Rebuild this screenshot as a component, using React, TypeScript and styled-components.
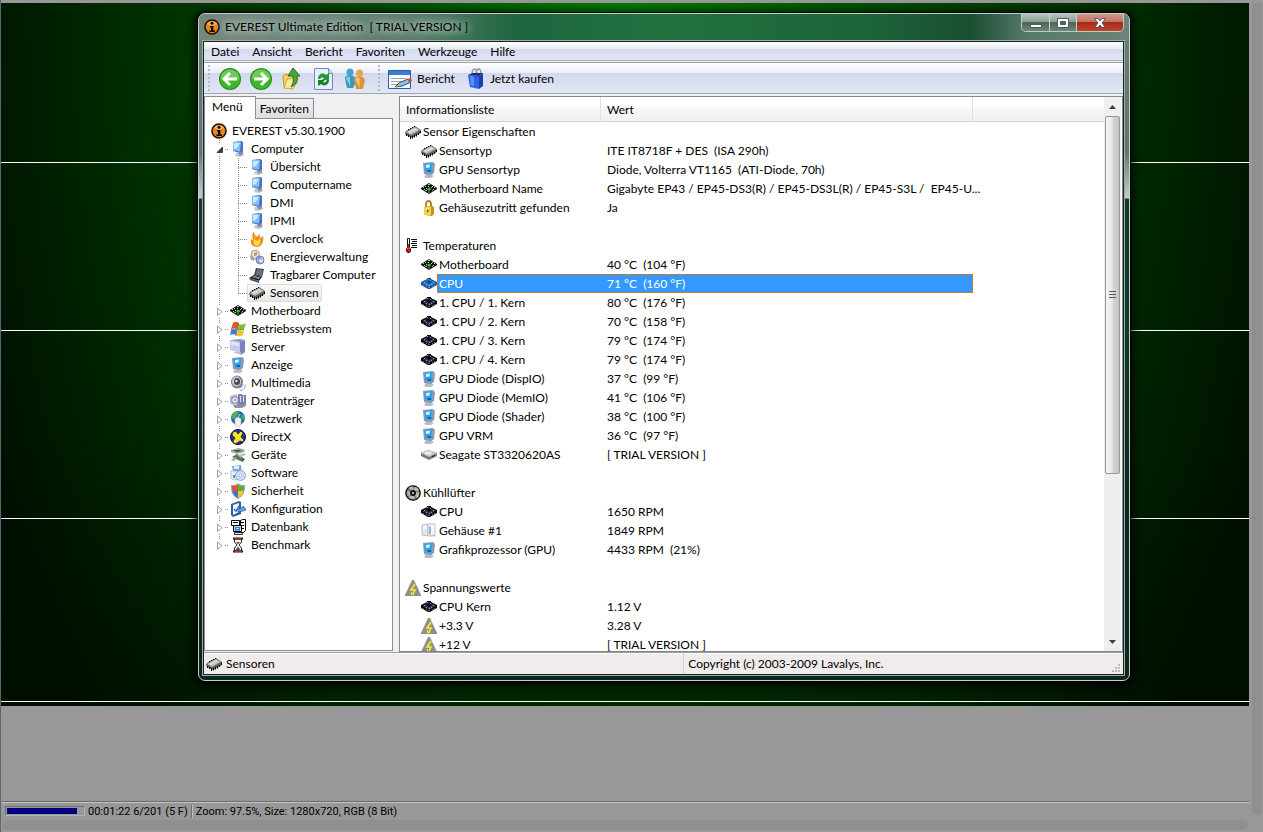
import React from "react";
import styled, { createGlobalStyle, css } from "styled-components";

const GlobalStyle = createGlobalStyle`
  * { box-sizing: border-box; }
  body {
    margin: 0;
    background: #989898;
    font-family: Lato, "Open Sans", sans-serif;
    font-size: 12px;
    line-height: 18px;
    color: #000;
  }
  button { font: inherit; color: inherit; border: 0; padding: 0; background: none; cursor: default; }
  ul { list-style: none; margin: 0; padding: 0; }
`;

/* ---------- icons ---------- */

type IconName =
  | "info" | "monitor" | "flame" | "power" | "laptop" | "chip" | "board" | "windows"
  | "server" | "display" | "speaker" | "drives" | "network" | "directx" | "devices"
  | "software" | "shield" | "config" | "database" | "hourglass" | "lock" | "thermo"
  | "cpu" | "cpuSelected" | "disk" | "fan" | "case" | "volt";

const cpuShape = (edge: string, body: string, light: string, core: string) => (
  <>
    <path d="m0 6 6-3V2h4v1l6 3v3l-7 4H7L0 9z" fill={edge} />
    <path d="m1 7 7-4 7 4-7 4z" fill={body} />
    <path d="m5 6 3-2 3 2-3 2z" fill={core} />
    <path d="M3 6.500h1M6 3.500h1M12 6.500h1M8 9.500h1M5 8.500h1M10 8.500h1M9 4.500h1" stroke={light} />
    <path d="M2 9.500h1M5 10.500h1M7 11.500h2M11 10.500h1M13 9.500h1" stroke={light} strokeWidth=".7" />
  </>
);

const drawings: Record<IconName, React.ReactNode> = {
  info: (
    <>
      <circle cx="8" cy="8" r="7" fill="#e8861e" stroke="#1d1108" strokeWidth="1.6" />
      <path d="M3 5a6 6 0 0 1 10 0L8 7z" fill="#f9b45a" />
      <circle cx="8" cy="4.2" r="1.5" fill="#140b04" />
      <path d="M6 7h3.400v4.400H11V13H5.400v-1.600H7V8.400H6z" fill="#140b04" />
    </>
  ),
  monitor: (
    <>
      <path d="M6 12h5l3 1v1l-4 2-5-1z" fill="#c3c5cc" />
      <path d="m8 12 5-2v3l-3 2z" fill="#8b93a6" />
      <path d="m3 1 8-1 2 1v9l-3 2-7-2z" fill="#4a6fc4" />
      <path d="m3 1 8 0-1 9.500-7-1z" fill="#7fbcf2" />
      <path d="m4 2 6 0-3 5-3 1z" fill="#cdeafd" />
    </>
  ),
  display: (
    <>
      <path d="M5 12h5l3 2-3 2H5l-2-1z" fill="#b7bcc8" />
      <path d="m2 1 10-1 2 2-1 9-3 2-7-1z" fill="#8799b5" />
      <path d="m3.500 2 7.500-1-.5 9.500-6-.500z" fill="#27a5ea" />
      <path d="m5 3 4-.5-.5 3L5 6z" fill="#d8f2ff" />
      <path d="M6 8h4v2H7z" fill="#1561b0" />
    </>
  ),
  flame: (
    <>
      <path d="M5 1c0 3 2 3 3 5 1-1 1-2 3-3-1 3 0 3 1 4l2-2c1 3 0 10-6 11-5 0-7-3-6-8l2 1C4 7 2 3 5 1z" fill="#ef8a1a" />
      <path d="M5 8c1 1 2 0 3 2 1-1 2-1 3-3 1 4 0 7-3 8-3 0-4-3-3-7z" fill="#ffd84e" />
      <path d="M5 2c0 2 2 3 2 5-1 0-2-1-2-5z" fill="#fbc15a" />
    </>
  ),
  power: (
    <>
      <path d="m3 2 4-1 3 2v5l-5 2-3-2z" fill="#e8e3df" stroke="#8a7f80" strokeWidth=".8" />
      <path d="m5 4 3-1v3L5 7z" fill="#d6874c" />
      <path d="M1 7c2-1 3 0 4 2v3L2 11z" fill="#a5a0ab" />
      <circle cx="11" cy="11" r="4" fill="#d5daf0" stroke="#6a73a8" />
      <path d="m8 9 3-2 2 3-1 4-3 1z" fill="#8c97d3" />
      <path d="m10 10 3 1-2 3z" fill="#fff" />
    </>
  ),
  laptop: (
    <>
      <path d="m7 1 8 1-2 8-8-2z" fill="#39424b" />
      <path d="m8 2 6 1-1.500 6-6-1.400z" fill="#66737e" />
      <path d="m5 8 8 2-3 4-10-3z" fill="#21262b" />
      <path d="m5 9 6 1.500-1 1.500-7-2z" fill="#8d979f" />
      <path d="m0 11 10 3v2L1 13z" fill="#4a5056" />
    </>
  ),
  chip: (
    <>
      <path d="m0 9 1-2 9-5 6 4v3l-9 5-6-3z" fill="#5f5f5f" />
      <path d="m1 8 9-5 5 3-9 5z" fill="#b5b7b0" />
      <path d="m2 8 8-4 3 1.500-8 4z" fill="#d8dacf" />
      <path d="M1.500 10v2M3.500 11v2M5.500 12v3M7.500 12v2.500M9.500 11v2.500M11.500 10v2.500M13.500 9v2M15.500 7v2M3 5.500h1M5 4.500h1M7 3.500h1M9 2.500h1" stroke="#000" />
    </>
  ),
  board: (
    <>
      <path d="m0 7 8-5 8 5v1l-8 5-8-5z" fill="#111" />
      <path d="M2 6.500h1M4 5.500h1M7 3.500h2M11 5.500h1M13 6.500h1M5 7.500h1M7 5.500h1M10 6.500h1M3 8.500h1M12 8.500h1M5 9.500h1" stroke="#c8c8c8" />
      <path d="m6 8 2-1.500L10.500 8 8 10z" fill="#1fd035" />
      <path d="M4 9.500h1M7 11h2M11 9.500h1" stroke="#888" />
    </>
  ),
  windows: (
    <>
      <path d="M3 2c2-2 4-1 6 0L7 8C5 7 3 7 1 8z" fill="#e4572a" />
      <path d="M9 3c2 1 4 1 7-1l-2 6c-2 1-4 1-6 0z" fill="#7cbb31" />
      <path d="M1 9c2-1 4-1 6 0l-1 5c-2-1-4-1-6 0z" fill="#3f7de0" />
      <path d="M8 9c2 1 4 1 6 0l-1 5c-2 1-4 2-6 1z" fill="#f3c326" />
      <path d="M8.500 2 6 15M1 8.500c5-2 8 2 13-.5" stroke="#5a4a3a" strokeWidth=".7" fill="none" />
    </>
  ),
  server: (
    <>
      <path d="m1 1 9-1 5 1v12l-4 3-1-1V4L1 3z" fill="#8f95cc" />
      <path d="m0 1 10 2v11L0 11z" fill="#c3c8ee" />
      <path d="m1 2 8 2v3L1 6z" fill="#e3e6fb" />
      <path d="m10 3 5-1v11l-5 2z" fill="#7b82bc" />
      <path d="M3 13h8v3z" fill="#babbd0" />
    </>
  ),
  speaker: (
    <>
      <ellipse cx="7" cy="7" rx="6" ry="6.500" fill="#7c7e82" />
      <ellipse cx="6.500" cy="6.500" rx="4.500" ry="5" fill="#caccce" />
      <ellipse cx="7" cy="6.500" rx="3" ry="3.500" fill="#46484c" />
      <circle cx="6.400" cy="6" r="1.300" fill="#dcdcdc" />
      <path d="M9 13c3 0 4-2 4-4M10 15.500c4 0 5-3 5.500-6" stroke="#8e96dd" fill="none" />
    </>
  ),
  drives: (
    <>
      <path d="m0 3 7-2v10l-5 1-2-2z" fill="#b8bbd0" />
      <path d="M8 1h4v12H7zM12 2h4v10h-4z" fill="#7a80b0" />
      <path d="M10 3h1v6h-1zM13 3h1v6h-1z" fill="#dfe2f5" />
      <circle cx="5" cy="7" r="3.300" fill="#e8eaf7" stroke="#8086ad" />
      <circle cx="5" cy="7" r="1" fill="#8086ad" />
      <path d="m3 12 12-1 1 2-4 2H5z" fill="#8f92a6" />
    </>
  ),
  network: (
    <>
      <circle cx="8" cy="7" r="7" fill="#2468b8" />
      <path d="M3 2c3-2 5-1 6 0L7 5 3 8 1 6zM12 3c2 1 3 4 2 6l-3-2z" fill="#4eb548" />
      <path d="M5 8c0-2 5-2 6 0v4c0 3-1 4-3 4s-3-1-3-4z" fill="#f2f1ec" stroke="#b8b6b0" strokeWidth=".6" />
      <path d="M8 7c0-2 2-2 2-4" stroke="#d6e6ef" fill="none" />
    </>
  ),
  directx: (
    <>
      <circle cx="8" cy="8" r="7.500" fill="#2030a8" stroke="#0c0c3c" />
      <path d="M3 3l3-1 2 3 3-3 2 2-2 4 3 3-1 2-3-1-3 2-3 1-1-3 2-3-3-3z" fill="#f4e228" stroke="#1a1a20" strokeWidth=".7" />
    </>
  ),
  devices: (
    <>
      <path d="m1 3 8-2 6 2-1 2-7 2-6-2z" fill="#9ba59a" />
      <path d="m3 3 6 0 3 1-5 1z" fill="#454b47" />
      <path d="m2 10 5-3 8 5-2 3-5-2z" fill="#57705a" />
      <path d="m8 8 6-2 2 2-5 2z" fill="#bfc5bd" />
      <path d="m1 13 4-3 2 1-3 3z" fill="#a1a8a0" />
      <path d="m7 8 4 3" stroke="#66d46e" />
    </>
  ),
  software: (
    <>
      <path d="m2 1 9-1 1 9-8 2z" fill="#7ca6e0" />
      <path d="m4 1 5 0v3H4z" fill="#e5effb" />
      <path d="m1 6 7 0 1 8-6 1-2-2z" fill="#e8eef6" stroke="#86a0c8" strokeWidth=".6" />
      <path d="M3 10h2v3H3z" fill="#4cae4c" />
      <circle cx="10.500" cy="10.500" r="5" fill="#cfdcf4" stroke="#8094c4" strokeWidth=".8" />
      <circle cx="10.500" cy="10.500" r="1.400" fill="#fff" stroke="#8094c4" strokeWidth=".6" />
    </>
  ),
  shield: (
    <>
      <path d="M8 0c2 2 4 2 7 2 0 7-1 11-7 14C2 13 1 9 1 2c3 0 5 0 7-2z" fill="#9da3a8" />
      <path d="M8 2v6H2.500C2 6 2 5 2 3c3 0 4 0 6-1z" fill="#e2572c" />
      <path d="M8 2c2 1 3 1 6 1 0 2 0 3-.5 5H8z" fill="#58b13b" />
      <path d="M2.500 8H8v7c-3-2-5-4-5.500-7z" fill="#3d72d6" />
      <path d="M8 8h5.500c-.5 3-2 5-5.500 7z" fill="#f5c92e" />
    </>
  ),
  config: (
    <>
      <path d="m1 3 8-3 2 1v12l-8 3-2-2z" fill="#2b5fa5" />
      <path d="m3 4 6-2v9l-6 3z" fill="#f3f8ff" />
      <path d="m4 8 2 2 3-5" stroke="#2d6bb5" strokeWidth="1.400" fill="none" />
      <path d="m8 8 4-1 1-2 2 2 1 2-3 1-5 1z" fill="#5fa6e8" stroke="#23548c" strokeWidth=".7" />
    </>
  ),
  database: (
    <>
      <path d="M1.500 1.500h8v5h-8zM10.500 1.500l2-1h3v11l-2 2h-3z" fill="#fff" stroke="#000" />
      <path d="M3 3.500h5M11 3.500h3M11 6.500h3M11 9.500h3" stroke="#000" />
      <path d="M3.500 6.500h8v6h-8z" fill="#d5d5d5" stroke="#000" />
      <path d="M5 8h5v3.500H5z" fill="#1c8be0" />
      <path d="M6.500 9.500h2" stroke="#fff" />
      <path d="M4.500 13.500h8v2h-8z" fill="#e8e8e8" stroke="#000" strokeWidth=".8" />
    </>
  ),
  hourglass: (
    <>
      <path d="M4.500 2v3L7 8l-2.500 3v3h7v-3L9 8l2.500-3V2z" fill="#fff" stroke="#222" />
      <path d="M6 5h4L8 7.500zM8 9.500l2.500 3.500h-5z" fill="#555" />
      <path d="M3 1.500h10M3 14.500h10" stroke="#111" strokeWidth="2" />
      <path d="M4 1.500h8M4 14.500h8" stroke="#d02020" />
    </>
  ),
  lock: (
    <>
      <path d="M5 7V4c0-4 5-4 5 0v3" stroke="#a58424" strokeWidth="1.800" fill="none" />
      <path d="m3 7 8-1 2 1v7l-2 2-7-1-1-1z" fill="#c89416" />
      <path d="M3 7h7v8H4l-1-1z" fill="#f2cf4a" />
      <path d="M4 8h4v5z" fill="#fae58c" />
      <path d="M6 9.500h1.500V12H6z" fill="#7a5608" />
    </>
  ),
  thermo: (
    <>
      <path d="M2.500.5h2v9l1 1v3l-1 1h-2l-1-1v-3l1-1z" fill="#fff" stroke="#111" />
      <path d="M3 6h1v4l1 1v3H2v-3l1-1z" fill="#e81010" />
      <path d="M6 1.500h6M7 3.500h5M6 5.500h6M7 7.500h5M6 9.500h6" stroke="#111" />
    </>
  ),
  cpu: cpuShape("#07070c", "#33334c", "#8d8daf", "#05050a"),
  cpuSelected: cpuShape("#17559c", "#3a78bd", "#68a8e2", "#104a8c"),
  disk: (
    <>
      <path d="m0 6 7-3 9 3v3l-8 4-8-4z" fill="#77797c" />
      <path d="m0 6 7-3 9 3-8 4z" fill="#c7c9cb" />
      <ellipse cx="7" cy="6" rx="3.500" ry="1.600" fill="#eceded" />
      <path d="m11 9 3-1v1l-3 1z" fill="#222" />
    </>
  ),
  fan: (
    <>
      <circle cx="8" cy="8" r="7.200" fill="#777" stroke="#0c0c0c" strokeWidth="1.300" />
      <path d="M8 8 4 2.500C6 1 7 1.500 8 2zM8 8l1-6c3 0 4 1 5 3zM8 8l6-1c0 3 0 4-2 6zM8 8l2 6c-3 0-4 0-6-2zM8 8l-5 3c-1-2-1-4 0-5z" fill="#b8b8b8" />
      <circle cx="8" cy="8" r="3" fill="#111" />
      <circle cx="8" cy="8" r=".9" fill="#fff" />
    </>
  ),
  case: (
    <>
      <path d="m1 2 6-1v12l-6-1z" fill="#dfe6ee" stroke="#a2adba" strokeWidth=".7" />
      <path d="m7 1 7 0v12l-7 0z" fill="#f4f7fa" stroke="#a2adba" strokeWidth=".7" />
      <path d="m2 3 4-.5v3L2 6z" fill="#fff" />
      <path d="M8 3.500h2v8H8z" fill="#9fb4cb" />
      <path d="M9 12.500h5" stroke="#b9c2cc" />
    </>
  ),
  volt: (
    <>
      <path d="M7 0h2l7 15v1H0v-1z" fill="#8f8f8f" />
      <path d="m10 4-4 6h4l-2 4" stroke="#f5ee28" strokeWidth="1.600" fill="none" />
      <path d="M6 14.500h3M6.500 12v2" stroke="#f5ee28" />
    </>
  ),
};

const IconSvg = styled.svg`
  display: block;
  flex: none;
  width: 16px;
  height: 16px;
`;

const Icon = ({ name }: { name: IconName }) => (
  <IconSvg viewBox="0 0 16 16" aria-hidden="true">{drawings[name]}</IconSvg>
);

/* ---------- page frame ---------- */

const Page = styled.div`
  display: flex;
  height: 100vh;
  min-height: 480px;
  padding: 3px 1px 2px 0;
  border-left: 1px solid #5d6472;
  background: #989898;
`;

const Column = styled.div`
  flex: 1;
  min-width: 0;
  display: flex;
  flex-direction: column;
`;

const ruler = (y: string) =>
  `linear-gradient(#fff, #fff) 0 ${y} / 100% 1px no-repeat`;

const Desktop = styled.main`
  flex: 1;
  min-height: 0;
  display: flex;
  padding: 10px 119px 25px 197px;
  background:
    ${ruler("159px")},
    ${ruler("327px")},
    ${ruler("515px")},
    ${ruler("698px")},
    linear-gradient(transparent 0 60%, rgba(0, 12, 0, 0.4) 100%),
    radial-gradient(ellipse 680px 1200px at 50% 0, #008000 0, #006600 20%, #004200 50%, #002e00 72%, #001000 100%);
`;

const Workspace = styled.div`
  flex: none;
  height: 95px;
`;

const PlayerStatus = styled.footer`
  flex: none;
  height: 19px;
  display: flex;
  align-items: center;
  border-top: 1px solid #6a6a6a;
  box-shadow: inset 0 1px #c4c4c4;
  padding-left: 4px;
  font-family: Roboto, "Liberation Sans", sans-serif;
  font-size: 11px;
  line-height: 17px;
`;

const Progress = styled.div`
  width: 80px;
  height: 10px;
  margin-right: 3px;
  padding: 1px;
  border: 1px solid;
  border-color: #707070 #b4b4b4 #b4b4b4 #707070;
`;

const ProgressFill = styled.div`
  height: 6px;
  background: #000080;
`;

const Divider = styled.span`
  width: 2px;
  height: 13px;
  margin: 0 3px;
  border-left: 1px solid #6e6e6e;
  border-right: 1px solid #c0c0c0;
`;

const BottomTrack = styled.div`
  flex: none;
  height: 10px;
  margin: 0 1px;
  border-radius: 5px;
  background: #8f8f8f;
`;

const SideTrack = styled.div`
  flex: none;
  width: 10px;
  margin: 0 0 15px 3px;
  border-radius: 0 0 5px 5px;
  background: #8f8f8f;
`;

/* ---------- application window ---------- */

const AppWindow = styled.section`
  flex: 1;
  min-width: 0;
  display: flex;
  flex-direction: column;
  padding: 0 5px 5px 4px;
  border: 1px solid #c3d0c9;
  border-radius: 7px;
  background: linear-gradient(#657f74 0, #5d776c 140px, #80948b 152px, #c3ccc8 184px, #12382b 185px, #12382b 310px, #0e2721 480px, #0c2620 100%);
  box-shadow: 0 0 0 1px #000, 0 2px 10px 4px rgba(0, 0, 0, 0.75);
`;

const TitleBar = styled.header`
  flex: none;
  height: 27px;
  display: flex;
  align-items: flex-start;
  margin: 0 -5px 0 -4px;
  padding-left: 5px;
  border-radius: 6px 6px 0 0;
  background: linear-gradient(90deg, #74877d 0, #6b8579 14%, #557a67 24%, #1d6640 34%, #21713f 50%, #1c6439 72%, #1a4f31 83%, #56796a 89%, #6b8478 100%);
`;

const Title = styled.h1`
  display: flex;
  align-items: center;
  gap: 5px;
  flex: 1;
  height: 26px;
  margin: 0;
  font-size: 12px;
  font-weight: 400;
  white-space: pre;
  span { text-shadow: 0 0 6px #c4d2ca, 0 0 10px #b4c6bc, 0 0 14px #b4c6bc; }
`;

const WindowControls = styled.div`
  display: flex;
  margin-right: 5px;
  height: 18px;
  border: 1px solid #bccac3;
  border-top: 0;
  border-radius: 0 0 5px 5px;
  overflow: hidden;
`;

const WindowButton = styled.button<{ $close?: boolean }>`
  display: flex;
  align-items: center;
  justify-content: center;
  width: ${(p) => (p.$close ? 47 : 27)}px;
  border-left: 1px solid #cbd6d0;
  background: ${(p) =>
    p.$close
      ? "linear-gradient(#d3988c 0, #c06f60 48%, #a42c14 50%, #c0432a 100%)"
      : "linear-gradient(#b5c4bc 0, #8b9f95 48%, #4d665a 50%, #6d887b 100%)"};
  &:first-child { border-left: 0; }
`;

const Client = styled.div`
  flex: 1;
  min-height: 0;
  display: flex;
  flex-direction: column;
  border: 1px solid #17241e;
  box-shadow: 0 0 0 1px #9db0a6;
  background: #f0f0f0;
`;

const MenuBar = styled.nav`
  flex: none;
  display: flex;
  gap: 13px;
  height: 19px;
  padding-left: 7px;
  border-bottom: 1px solid #a9aebd;
  background: linear-gradient(#fff 0, #e6eaf5 7px, #d4daee 7px, #e1e6f6 100%);
`;

const ToolBar = styled.div`
  flex: none;
  display: flex;
  align-items: center;
  height: 32px;
  margin-top: 1px;
  border-top: 1px solid #a0a0a0;
  border-bottom: 1px solid #a0a4b0;
  padding: 2px 0 0 4px;
  background: linear-gradient(#fff 0, #e8edf7 10px, #d3d9ed 10px, #e2e7f7 100%);
`;

const Grip = styled.span`
  width: 2px;
  height: 28px;
  margin-right: 8px;
  background: repeating-linear-gradient(#b4bacb 0 2px, transparent 2px 4px);
`;

const ToolButton = styled.button<{ $gap: number }>`
  display: flex;
  align-items: center;
  gap: 5px;
  height: 24px;
  margin-right: ${(p) => p.$gap}px;
  svg { display: block; }
`;

const Body = styled.div`
  flex: 1;
  min-height: 0;
  display: flex;
  gap: 6px;
  margin-top: 2px;
`;

/* ---------- navigation tree ---------- */

const Sidebar = styled.aside`
  flex: none;
  width: 189px;
  display: flex;
  flex-direction: column;
  margin-bottom: 1px;
`;

const Tabs = styled.div`
  flex: none;
  display: flex;
  align-items: flex-end;
  height: 22px;
`;

const Tab = styled.button<{ $active?: boolean }>`
  height: 20px;
  padding: 0 4px;
  border: 1px solid #8c8e94;
  border-left: 0;
  border-bottom: 0;
  background: linear-gradient(#f2f2f2, #dcdcdc);
  ${(p) =>
    p.$active &&
    css`
      position: relative;
      height: 23px;
      margin-bottom: -1px;
      padding: 0 12px 2px 7px;
      border-left: 1px solid #8c8e94;
      background: #fff;
    `}
`;

const TreePanel = styled.div`
  flex: 1;
  min-height: 0;
  overflow: hidden;
  padding: 3px 0 0 6px;
  border: 1px solid #8c8e94;
  background: #fff;
`;

const dotsDown = "repeating-linear-gradient(#8a8a8a 0 1px, transparent 1px 2px)";
const dotsAcross = "repeating-linear-gradient(90deg, #8a8a8a 0 1px, transparent 1px 2px)";

const Branches = styled.ul`
  background: ${dotsDown} 8px 0 / 1px calc(100% - 9px) no-repeat;
`;

const Leaves = styled.ul`
  margin-left: 27px;
  background: ${dotsDown} 0 0 / 1px calc(100% - 9px) no-repeat;
`;

const TreeRow = styled.button<{ $level: 0 | 1 | 2 }>`
  display: flex;
  align-items: center;
  height: 18px;
  ${(p) => p.$level === 0 && css`gap: 5px;`}
  ${(p) =>
    p.$level === 1 &&
    css`
      gap: 5px;
      background: ${dotsAcross} 12px 9px / 6px 1px no-repeat;
      padding-left: 5px;
    `}
  ${(p) =>
    p.$level === 2 &&
    css`
      padding-left: 9px;
      background: ${dotsAcross} 0 9px / 10px 1px no-repeat;
    `}
`;

const LeafLabel = styled.span<{ $selected?: boolean }>`
  display: flex;
  align-items: center;
  gap: 5px;
  height: 18px;
  padding: 0 3px 0 2px;
  border-radius: 2px;
  ${(p) =>
    p.$selected &&
    css`
      background: linear-gradient(#fafafa, #e6e6e6);
      box-shadow: inset 0 0 0 1px #dcdcdc;
    `}
`;

const Expander = styled.svg`
  display: block;
  flex: none;
  width: 8px;
  height: 11px;
  margin-right: 1px;
  background: #fff;
`;

type Leaf = { icon: IconName; label: string; selected?: boolean };
type Branch = { icon: IconName; label: string; children?: Leaf[] };

const tree: Branch[] = [
  {
    icon: "monitor",
    label: "Computer",
    children: [
      { icon: "monitor", label: "Übersicht" },
      { icon: "monitor", label: "Computername" },
      { icon: "monitor", label: "DMI" },
      { icon: "monitor", label: "IPMI" },
      { icon: "flame", label: "Overclock" },
      { icon: "power", label: "Energieverwaltung" },
      { icon: "laptop", label: "Tragbarer Computer" },
      { icon: "chip", label: "Sensoren", selected: true },
    ],
  },
  { icon: "board", label: "Motherboard" },
  { icon: "windows", label: "Betriebssystem" },
  { icon: "server", label: "Server" },
  { icon: "display", label: "Anzeige" },
  { icon: "speaker", label: "Multimedia" },
  { icon: "drives", label: "Datenträger" },
  { icon: "network", label: "Netzwerk" },
  { icon: "directx", label: "DirectX" },
  { icon: "devices", label: "Geräte" },
  { icon: "software", label: "Software" },
  { icon: "shield", label: "Sicherheit" },
  { icon: "config", label: "Konfiguration" },
  { icon: "database", label: "Datenbank" },
  { icon: "hourglass", label: "Benchmark" },
];

const NavigationTree = () => (
  <TreePanel>
    <TreeRow $level={0}>
      <Icon name="info" />
      EVEREST v5.30.1900
    </TreeRow>
    <Branches>
      {tree.map((branch) => (
        <li key={branch.label}>
          <TreeRow $level={1}>
            <Expander viewBox="0 0 8 11" aria-hidden="true">
              {branch.children ? (
                <path d="M6.500 3v5.500H1z" fill="#404040" stroke="#262626" strokeWidth=".8" />
              ) : (
                <path d="M1.500 2v7.500L6 5.750z" fill="#fff" stroke="#a0a0a0" />
              )}
            </Expander>
            <Icon name={branch.icon} />
            {branch.label}
          </TreeRow>
          {branch.children && (
            <Leaves>
              {branch.children.map((leaf) => (
                <li key={leaf.label}>
                  <TreeRow $level={2}>
                    <LeafLabel $selected={leaf.selected}>
                      <Icon name={leaf.icon} />
                      {leaf.label}
                    </LeafLabel>
                  </TreeRow>
                </li>
              ))}
            </Leaves>
          )}
        </li>
      ))}
    </Branches>
  </TreePanel>
);

/* ---------- sensor list ---------- */

const ListPanel = styled.div`
  flex: 1;
  min-width: 0;
  display: flex;
  padding-right: 1px;
  border: 1px solid #828790;
  background: #fff;
`;

const ListView = styled.div`
  flex: 1;
  min-width: 0;
  overflow: hidden;
`;

const SensorTable = styled.table`
  width: 100%;
  table-layout: fixed;
  border-collapse: separate;
  border-spacing: 0;
`;

const HeaderCell = styled.th`
  height: 25px;
  padding: 2px 6px 0;
  border-bottom: 1px solid #d5d5d5;
  border-right: 1px solid #e0e1e4;
  background: linear-gradient(#fff 0 10px, #f6f7f9 10px, #f1f2f4 100%);
  font-weight: 400;
  text-align: left;
  &:last-child { border-right: 0; }
`;

const NameCell = styled.td<{ $group?: boolean }>`
  height: 19px;
  padding: 0 0 0 ${(p) => (p.$group ? 5 : 21)}px;
`;

const NameRow = styled.div`
  display: flex;
  align-items: center;
  height: 19px;
`;

const NameLabel = styled.span<{ $selected?: boolean }>`
  flex: 1;
  height: 19px;
  padding-left: 2px;
  line-height: 19px;
  white-space: nowrap;
  ${(p) =>
    p.$selected &&
    css`
      padding-left: 1px;
      line-height: 17px;
      border: 1px solid #c47a35;
      border-right: 0;
      background: #3399ff;
      color: #fff;
    `}
`;

const ValueCell = styled.td<{ $selected?: boolean }>`
  height: 19px;
  padding: 0 0 0 6px;
  line-height: 19px;
  white-space: pre;
  ${(p) =>
    p.$selected &&
    css`
      line-height: 17px;
      border: 1px solid #c47a35;
      border-left: 0;
      background: #3399ff;
      color: #fff;
    `}
`;

type SensorRow = { icon?: IconName; name?: string; value?: string; group?: boolean; selected?: boolean };

const sensors: SensorRow[] = [
  { icon: "chip", name: "Sensor Eigenschaften", group: true },
  { icon: "chip", name: "Sensortyp", value: "ITE IT8718F + DES  (ISA 290h)" },
  { icon: "display", name: "GPU Sensortyp", value: "Diode, Volterra VT1165  (ATI-Diode, 70h)" },
  { icon: "board", name: "Motherboard Name", value: "Gigabyte EP43 / EP45-DS3(R) / EP45-DS3L(R) / EP45-S3L /  EP45-U..." },
  { icon: "lock", name: "Gehäusezutritt gefunden", value: "Ja" },
  {},
  { icon: "thermo", name: "Temperaturen", group: true },
  { icon: "board", name: "Motherboard", value: "40 °C  (104 °F)" },
  { icon: "cpuSelected", name: "CPU", value: "71 °C  (160 °F)", selected: true },
  { icon: "cpu", name: "1. CPU / 1. Kern", value: "80 °C  (176 °F)" },
  { icon: "cpu", name: "1. CPU / 2. Kern", value: "70 °C  (158 °F)" },
  { icon: "cpu", name: "1. CPU / 3. Kern", value: "79 °C  (174 °F)" },
  { icon: "cpu", name: "1. CPU / 4. Kern", value: "79 °C  (174 °F)" },
  { icon: "display", name: "GPU Diode (DispIO)", value: "37 °C  (99 °F)" },
  { icon: "display", name: "GPU Diode (MemIO)", value: "41 °C  (106 °F)" },
  { icon: "display", name: "GPU Diode (Shader)", value: "38 °C  (100 °F)" },
  { icon: "display", name: "GPU VRM", value: "36 °C  (97 °F)" },
  { icon: "disk", name: "Seagate ST3320620AS", value: "[ TRIAL VERSION ]" },
  {},
  { icon: "fan", name: "Kühllüfter", group: true },
  { icon: "cpu", name: "CPU", value: "1650 RPM" },
  { icon: "case", name: "Gehäuse #1", value: "1849 RPM" },
  { icon: "display", name: "Grafikprozessor (GPU)", value: "4433 RPM  (21%)" },
  {},
  { icon: "volt", name: "Spannungswerte", group: true },
  { icon: "cpu", name: "CPU Kern", value: "1.12 V" },
  { icon: "volt", name: "+3.3 V", value: "3.28 V" },
  { icon: "volt", name: "+12 V", value: "[ TRIAL VERSION ]" },
];

const ScrollBar = styled.div`
  flex: none;
  width: 17px;
  display: flex;
  flex-direction: column;
  padding: 0 1px;
  background: #efefef;
`;

const ScrollArrow = styled.button`
  flex: none;
  display: flex;
  align-items: center;
  justify-content: center;
  height: 19px;
`;

const Thumb = styled.div`
  flex: 357;
  display: flex;
  align-items: center;
  justify-content: center;
  border: 1px solid #979797;
  border-radius: 2px;
  background: linear-gradient(90deg, #f5f5f5 0, #e9e9eb 48%, #d6d6d9 52%, #c4c4c8 100%);
`;

const ThumbRest = styled.div`
  flex: 159;
`;

/* ---------- window status bar ---------- */

const StatusBar = styled.footer`
  flex: none;
  display: flex;
  height: 22px;
  border-top: 1px solid #9a9aa0;
  box-shadow: inset 0 1px #fff;
  background: #f0eceb;
`;

const StatusCell = styled.div<{ $grow: number }>`
  flex: ${(p) => p.$grow} 1 0;
  display: flex;
  align-items: center;
  gap: 4px;
  padding: 1px 2px 0 2px;
  & + & { padding-left: 4px; border-left: 1px solid #d5d2d2; }
`;

const Resize = styled.svg`
  display: block;
  width: 10px;
  height: 10px;
  margin-left: auto;
  align-self: flex-end;
`;

const menus = ["Datei", "Ansicht", "Bericht", "Favoriten", "Werkzeuge", "Hilfe"];

const MenuButton = styled.button`
  height: 18px;
  padding-top: 1px;
`;

const Arrow = ({ flip }: { flip?: boolean }) => (
  <svg width="24" height="24" viewBox="0 0 24 24" aria-hidden="true">
    <circle cx="12" cy="12" r="11" fill="#268f1a" />
    <circle cx="12" cy="12" r="10" fill="#3fb52b" />
    <path d="M2.500 12a9.500 9.500 0 0 1 19 0c-5 2-13-2-19 0z" fill="#6ccb58" />
    <path
      d={flip ? "M5 12h12M12 6l6 6-6 6" : "M19 12H7M12 6l-6 6 6 6"}
      fill="none"
      stroke="#fff"
      strokeWidth="3"
    />
  </svg>
);

export default function App() {
  return (
    <>
      <GlobalStyle />
      <Page>
        <Column>
          <Desktop>
            <AppWindow>
              <TitleBar>
                <Title>
                  <Icon name="info" />
                  <span>EVEREST Ultimate Edition  [ TRIAL VERSION ]</span>
                </Title>
                <WindowControls>
                  <WindowButton aria-label="Minimieren">
                    <svg width="12" height="12" viewBox="0 0 12 12"><path d="M.5 7.500h11v3H.5z" fill="#fff" stroke="#4a5a58" /></svg>
                  </WindowButton>
                  <WindowButton aria-label="Maximieren">
                    <svg width="12" height="12" viewBox="0 0 12 12"><path d="M.5 1.500h11v9H.5zM3.500 4.500v3h5v-3z" fill="#fff" fillRule="evenodd" stroke="#4a5a68" /></svg>
                  </WindowButton>
                  <WindowButton $close aria-label="Schließen">
                    <svg width="12" height="12" viewBox="0 0 12 12"><path d="M.5 1.500h3.500l2 2.500 2-2.500h3.500L8 6l3.500 4.500H8L6 8l-2 2.500H.5L4 6z" fill="#fff" stroke="#4a4a5c" strokeWidth=".9" /></svg>
                  </WindowButton>
                </WindowControls>
              </TitleBar>
              <Client>
                <MenuBar>
                  {menus.map((m) => <MenuButton key={m}>{m}</MenuButton>)}
                </MenuBar>
                <ToolBar>
                  <Grip />
                  <ToolButton $gap={7} aria-label="Zurück"><Arrow /></ToolButton>
                  <ToolButton $gap={9} aria-label="Vorwärts"><Arrow flip /></ToolButton>
                  <ToolButton $gap={12} aria-label="Ebene höher">
                    <svg width="20" height="24" viewBox="0 0 20 24">
                      <path d="m1 10 1-2 4-1 2 2 6-1 1 8-5 6-8-2z" fill="#f3d36a" stroke="#c89a2c" />
                      <path d="m2 21 3-9 11-1-5 11z" fill="#fbe894" stroke="#cfa63c" />
                      <path d="m11 1 7 8h-3c1 6-2 9-6 11 2-3 3-6 2-11H6z" fill="#4aa63a" stroke="#2a6e1e" />
                    </svg>
                  </ToolButton>
                  <ToolButton $gap={11} aria-label="Aktualisieren">
                    <svg width="20" height="24" viewBox="0 0 20 24">
                      <path d="M.5 1.500h14l4 5v16H.5z" fill="#e6effc" stroke="#6d8cbc" />
                      <path d="M14.500 1.500v5h4" fill="#c4d6f0" stroke="#6d8cbc" />
                      <path d="M4 12c0-5 5-7 8-4l3-2v7H8l2-2c-2-1-3 0-4 1z" fill="#279a32" />
                      <path d="M15 13c0 5-5 7-8 4l-3 2v-6h7l-2 2c2 1 3 0 4-2z" fill="#1b7f28" />
                    </svg>
                  </ToolButton>
                  <ToolButton $gap={13} aria-label="Benutzer">
                    <svg width="20" height="24" viewBox="0 0 20 24">
                      <circle cx="5" cy="5" r="3.500" fill="#4aa3c6" />
                      <path d="M0 11c0-4 9-4 10 0v6l-2 4H2l-1-4z" fill="#3b98c0" />
                      <path d="M1 12c1-3 4-3 4-1v9l-2-5z" fill="#85cbe2" />
                      <circle cx="14.500" cy="6" r="3.500" fill="#e3a548" />
                      <path d="M9 13c0-5 10-5 11 0l-1 5-1 4h-7l-1-5z" fill="#da9634" />
                      <path d="M10.500 13c1-3 4-3 4-1v9l-2-5z" fill="#f3c983" />
                    </svg>
                  </ToolButton>
                  <Grip />
                  <ToolButton $gap={12}>
                    <svg width="24" height="24" viewBox="0 0 24 24">
                      <path d="M.5 3.500h22v18H.5z" fill="#f8fbff" stroke="#2a5fa8" />
                      <path d="M1 4h21v4H1z" fill="#3c7dd0" />
                      <path d="M3 11.500h15M3 14.500h12M3 17.500h6" stroke="#9aa3b0" />
                      <path d="m7 20 4-4 9-4 3 3-9 4z" fill="#8fc4ef" stroke="#2c4468" />
                      <path d="m19 12 4-1 1 3-3 1z" fill="#e0482e" />
                      <path d="m7 20 4-3 1 2z" fill="#e8b050" />
                    </svg>
                    Bericht
                  </ToolButton>
                  <ToolButton $gap={0}>
                    <svg width="18" height="24" viewBox="0 0 18 24">
                      <path d="M5 8c0-8 5-8 5 0M9 6c1-6 5-5 5 1" fill="none" stroke="#8f94a6" strokeWidth="1.400" />
                      <path d="m1 8 11 1v13L3 20z" fill="#2f62e0" />
                      <path d="m1 8 5-2 10 0-4 3z" fill="#1a2c7c" />
                      <path d="m12 9 4-3v13l-4 3z" fill="#1a3fae" />
                      <path d="m3 9 4 1v9l-3-1z" fill="#5f92f7" />
                    </svg>
                    Jetzt kaufen
                  </ToolButton>
                </ToolBar>
                <Body>
                  <Sidebar>
                    <Tabs role="tablist">
                      <Tab $active role="tab" aria-selected="true">Menü</Tab>
                      <Tab role="tab" aria-selected="false">Favoriten</Tab>
                    </Tabs>
                    <NavigationTree />
                  </Sidebar>
                  <ListPanel>
                    <ListView>
                      <SensorTable>
                        <colgroup>
                          <col style={{ width: 201 }} />
                          <col style={{ width: 372 }} />
                          <col />
                        </colgroup>
                        <thead>
                          <tr>
                            <HeaderCell>Informationsliste</HeaderCell>
                            <HeaderCell>Wert</HeaderCell>
                            <HeaderCell />
                          </tr>
                        </thead>
                        <tbody>
                          {sensors.map((row, i) => (
                            <tr key={i}>
                              <NameCell $group={row.group}>
                                {row.icon && (
                                  <NameRow>
                                    <Icon name={row.icon} />
                                    <NameLabel $selected={row.selected}>{row.name}</NameLabel>
                                  </NameRow>
                                )}
                              </NameCell>
                              <ValueCell $selected={row.selected}>{row.value}</ValueCell>
                              <td />
                            </tr>
                          ))}
                        </tbody>
                      </SensorTable>
                    </ListView>
                    <ScrollBar>
                      <ScrollArrow aria-label="Nach oben">
                        <svg width="7" height="4" viewBox="0 0 7 4"><path d="M0 4 3.500 0 7 4z" fill="#404040" /></svg>
                      </ScrollArrow>
                      <Thumb>
                        <svg width="7" height="8" viewBox="0 0 7 8"><path d="M0 .5h7M0 3.500h7M0 6.500h7" stroke="#5c5c60" /></svg>
                      </Thumb>
                      <ThumbRest />
                      <ScrollArrow aria-label="Nach unten">
                        <svg width="7" height="4" viewBox="0 0 7 4"><path d="M0 0h7L3.500 4z" fill="#404040" /></svg>
                      </ScrollArrow>
                    </ScrollBar>
                  </ListPanel>
                </Body>
                <StatusBar>
                  <StatusCell $grow={481}>
                    <Icon name="chip" />
                    Sensoren
                  </StatusCell>
                  <StatusCell $grow={438}>
                    Copyright (c) 2003-2009 Lavalys, Inc.
                    <Resize viewBox="0 0 10 10" aria-hidden="true">
                      <path d="M7 1h2M4 4h2M7 4h2M1 7h2M4 7h2M7 7h2" stroke="#bdb9b9" strokeWidth="2" />
                    </Resize>
                  </StatusCell>
                </StatusBar>
              </Client>
            </AppWindow>
          </Desktop>
          <Workspace />
          <PlayerStatus>
            <Progress role="progressbar" aria-label="Wiedergabe" aria-valuenow={92}>
              <ProgressFill style={{ width: "92%" }} />
            </Progress>
            <span>00:01:22 6/201 (5 F)</span>
            <Divider />
            <span>Zoom: 97.5%, Size: 1280x720, RGB (8 Bit)</span>
          </PlayerStatus>
          <BottomTrack />
        </Column>
        <SideTrack />
      </Page>
    </>
  );
}
